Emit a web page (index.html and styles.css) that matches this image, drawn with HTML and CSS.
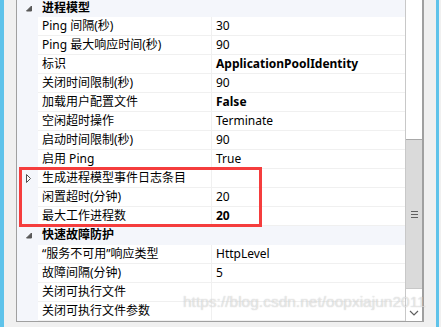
FILE: index.html
```html
<!DOCTYPE html>
<html lang="zh-CN">
<head>
<meta charset="utf-8">
<link rel="stylesheet" href="styles.css">
</head>
<body>
<div class="screen">
  <div class="edge-blue"></div>
  <div class="edge-gray"></div>
  <div class="frame">
    <div class="grid">
      <div class="cat"><span class="gut"><svg width="21" height="17" viewBox="0 0 21 17"><polygon points="14.5,6 14.5,11 9.5,11" fill="#595959" stroke="#595959" stroke-width="1" stroke-linejoin="round"/></svg></span><span class="cat-name">进程模型</span></div>
      <div class="row"><span class="gut"></span><span class="lbl">Ping 间隔(秒)</span><span class="val">30</span></div>
      <div class="row"><span class="gut"></span><span class="lbl">Ping 最大响应时间(秒)</span><span class="val">90</span></div>
      <div class="row"><span class="gut"></span><span class="lbl">标识</span><span class="val b">ApplicationPoolIdentity</span></div>
      <div class="row"><span class="gut"></span><span class="lbl">关闭时间限制(秒)</span><span class="val">90</span></div>
      <div class="row"><span class="gut"></span><span class="lbl">加载用户配置文件</span><span class="val b">False</span></div>
      <div class="row"><span class="gut"></span><span class="lbl">空闲超时操作</span><span class="val">Terminate</span></div>
      <div class="row"><span class="gut"></span><span class="lbl">启动时间限制(秒)</span><span class="val">90</span></div>
      <div class="row"><span class="gut"></span><span class="lbl">启用 Ping</span><span class="val">True</span></div>
      <div class="row"><span class="gut"><svg width="21" height="19" viewBox="0 0 21 19"><polygon points="9.5,5.5 13.5,9.5 9.5,13.5" fill="#fff" stroke="#4d4d4d" stroke-width="1" stroke-linejoin="miter"/></svg></span><span class="lbl">生成进程模型事件日志条目</span><span class="val"></span></div>
      <div class="row"><span class="gut"></span><span class="lbl">闲置超时(分钟)</span><span class="val">20</span></div>
      <div class="row"><span class="gut"></span><span class="lbl">最大工作进程数</span><span class="val b">20</span></div>
      <div class="cat"><span class="gut"><svg width="21" height="19" viewBox="0 0 21 19"><polygon points="14.5,7 14.5,12 9.5,12" fill="#595959" stroke="#595959" stroke-width="1" stroke-linejoin="round"/></svg></span><span class="cat-name">快速故障防护</span></div>
      <div class="row"><span class="gut"></span><span class="lbl">“服务不可用”响应类型</span><span class="val">HttpLevel</span></div>
      <div class="row"><span class="gut"></span><span class="lbl">故障间隔(分钟)</span><span class="val">5</span></div>
      <div class="row"><span class="gut"></span><span class="lbl">关闭可执行文件</span><span class="val"></span></div>
      <div class="row"><span class="gut"></span><span class="lbl">关闭可执行文件参数</span><span class="val"></span></div>
    </div>
    <div class="scrollbar">
      <div class="track"></div>
      <div class="thumb"><span class="grip"></span></div>
      <div class="down"><svg width="10" height="6" viewBox="0 0 10 6"><polyline points="1,1 5,5 9,1" fill="none" stroke="#606060" stroke-width="1.2"/></svg></div>
    </div>
  </div>
  <div class="edge-gray-r"></div>
  <div class="edge-blue-r"></div>
  <div class="highlight"></div>
  <div class="watermark">https://blog.csdn.net/oopxiajun2011</div>
</div>
</body>
</html>
```
FILE: styles.css
```css
html, body {
  margin: 0;
  padding: 0;
  background: #f0f0f0;
}
.screen {
  position: relative;
  width: 441px;
  height: 327px;
  display: flex;
  overflow: hidden;
  font-family: "Noto Sans", "Noto Sans CJK SC", sans-serif;
  font-size: 12px;
  color: #000;
}
.edge-blue { width: 4px; background: #5fc3ea; flex: none; }
.edge-gray { width: 12px; background: #f0f0f0; flex: none; }
.edge-gray-r { width: 12px; background: #f0f0f0; flex: none; }
.edge-blue-r { width: 3px; background: #5fc3ea; flex: none; }
.frame {
  flex: none;
  width: 408px;
  height: 322px;
  border-left: 1px solid #a0a0a0;
  border-right: 2px solid #a0a0a0;
  border-bottom: 1px solid #a0a0a0;
  display: flex;
  background: #fff;
  box-sizing: border-box;
}
.grid {
  width: 391px;
  display: flex;
  flex-direction: column;
}
.row, .cat {
  display: flex;
  height: 19px;
  flex: none;
  line-height: 18px;
}
.cat:first-child { height: 17px; line-height: 16px; }
.gut {
  width: 21px;
  flex: none;
  background: #f4f6fb;
  display: flex;
}
.cat {
  background: #f4f6fb;
}
.cat-name {
  font-weight: bold;
  padding-left: 4px;
}
.lbl {
  width: 174px;
  flex: none;
  box-sizing: border-box;
  padding-left: 4px;
  border-bottom: 1px solid #f0f0f0;
  border-right: 1px solid #f0f0f0;
  white-space: nowrap;
}
.val {
  flex: 1;
  padding-left: 4px;
  border-bottom: 1px solid #f0f0f0;
  white-space: nowrap;
}
.val.b { font-weight: bold; }
.scrollbar {
  width: 16px;
  flex: none;
  border-left: 1px solid #c8c8c8;
  display: flex;
  flex-direction: column;
  background: #fff;
}
.track { height: 139px; flex: none; }
.thumb {
  height: 150px;
  flex: none;
  background: #dadada;
  border-top: 1px solid #a8a8a8;
  border-bottom: 1px solid #c8c8c8;
  box-sizing: border-box;
  display: flex;
  align-items: center;
  justify-content: center;
}
.grip {
  width: 7px;
  height: 5px;
  border-top: 1px solid #606060;
  border-bottom: 1px solid #606060;
  position: relative;
}
.grip::after {
  content: "";
  position: absolute;
  left: 0; right: 0; top: 2px;
  border-top: 1px solid #606060;
}
.down {
  flex: 1;
  display: flex;
  align-items: flex-end;
  justify-content: center;
  padding-bottom: 5px;
}
.highlight {
  position: absolute;
  left: 19px;
  top: 167px;
  width: 243px;
  height: 60px;
  border: 3px solid #f53d3d;
  box-sizing: border-box;
}
.watermark {
  position: absolute;
  left: 183px;
  top: 293px;
  font-family: "Liberation Sans", Arial, sans-serif;
  font-size: 15.5px;
  color: rgba(255,255,255,0.55);
  text-shadow: 0 0 1px rgba(110,110,110,0.45);
  white-space: nowrap;
}
```
